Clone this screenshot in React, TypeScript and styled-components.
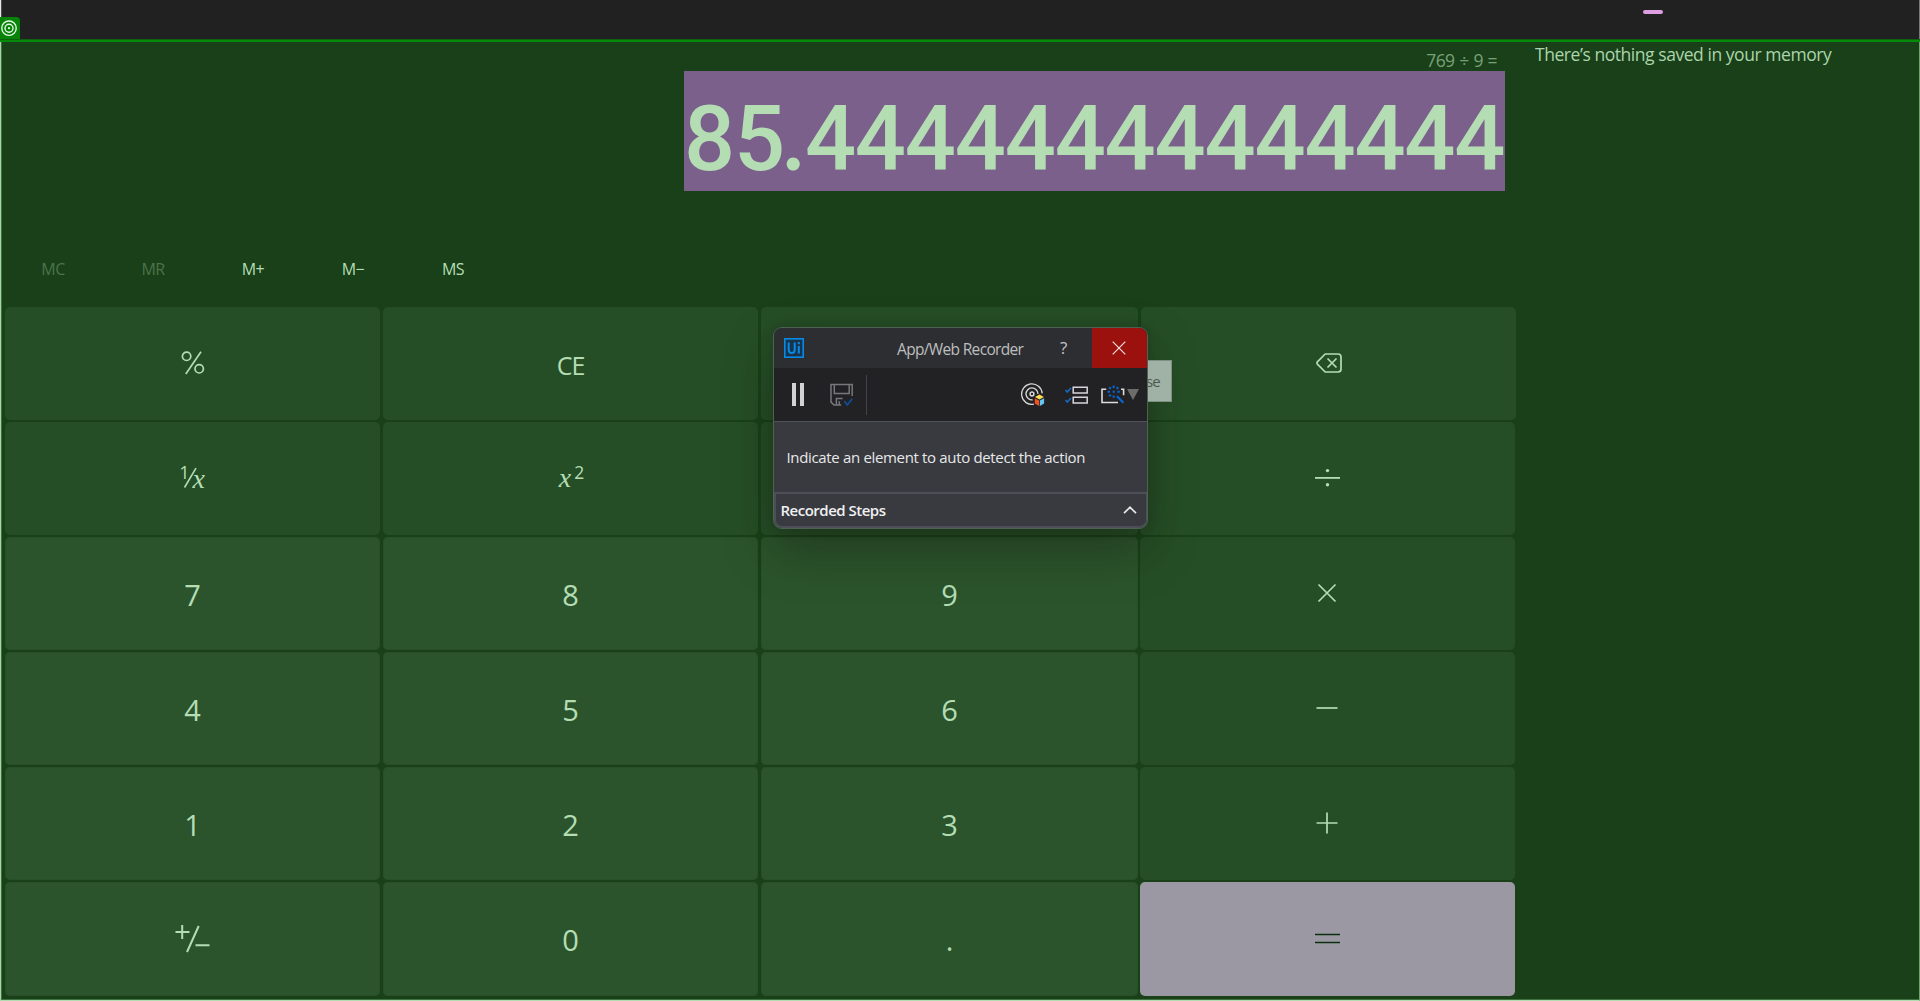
import React from "react";
import styled, { createGlobalStyle } from "styled-components";

const Global = createGlobalStyle`
  * { box-sizing: border-box; }
  body { margin: 0; background: #194019; font-family: "Open Sans", "Noto Sans", sans-serif; overflow: hidden; }
`;

const Screen = styled.div`
  position: relative;
  width: 1920px;
  height: 1001px;
  display: flex;
  flex-direction: column;
  overflow: hidden;
  background: #194019;
`;

const TopStrip = styled.header`
  height: 39px;
  flex: none;
  display: flex;
  align-items: flex-end;
  background: #212121;
  border-left: 1px solid #e4e6e4;
  border-right: 1px solid #777;
  box-shadow: inset 1px 0 #4c4e4c;
`;

const TargetTag = styled.div`
  width: 20px;
  height: 22px;
  margin-left: -1px;
  background: #078407;
  border-top-right-radius: 4px;
  svg { display: block; }
`;

const Pill = styled.div`
  width: 20px;
  height: 4px;
  margin: 0 0 25px 1623px;
  border-radius: 2px;
  background: #df9ee2;
`;

const HighlightEdge = styled.div`
  height: 3px;
  flex: none;
  border-top: 1px solid #0d600f;
  background: #068a0a;
`;

const Workspace = styled.main`
  flex: 1;
  display: flex;
  border-left: 1px solid #a9d5a9;
  border-right: 1px solid #6da56d;
  border-bottom: 1px solid #b3dcb3;
  box-shadow: inset 1px 0 #3f703f, inset 0 -1px #3f703f;
`;

const Calculator = styled.section`
  width: 1515px;
  padding-left: 4px;
`;

const Readout = styled.div`
  height: 201px;
  padding-right: 11px;
  display: flex;
  flex-direction: column;
  align-items: flex-end;
`;

const Expression = styled.div`
  height: 29px;
  padding: 5px 8px 0 0;
  font-size: 17.5px;
  line-height: 26px;
  letter-spacing: -0.6px;
  word-spacing: 0.8px;
  color: #78a277;
  white-space: nowrap;
`;

const Result = styled.div`
  width: 821px;
  height: 120px;
  background: #7a608a;
  color: #b4ddb4;
  font-family: Roboto, "Open Sans", sans-serif;
  font-size: 90px;
  font-weight: 500;
  line-height: 137px;
  letter-spacing: -1.2px;
  white-space: nowrap;
`;

const Point = styled.span`
  display: inline-block;
  width: 21px;
  font-family: Lato, sans-serif;
  font-weight: 700;
  font-size: 86px;
  line-height: 1;
  text-indent: -1px;
`;

const MemoryBar = styled.nav`
  height: 64px;
  display: flex;
`;

const MemoryKey = styled.div<{ $off?: boolean }>`
  width: 100px;
  padding-top: 14px;
  padding-right: 4px;
  text-align: center;
  font-size: 16px;
  line-height: 25px;
  letter-spacing: -0.6px;
  color: ${(p) => (p.$off ? "#4a7449" : "#b4ddb4")};
`;

const Pad = styled.div`
  display: flex;
  flex-direction: column;
  gap: 2px;
`;

const KeyRow = styled.div<{ $shift?: boolean; $tall?: boolean }>`
  display: grid;
  grid-template-columns: 375px 375px 377px 375px;
  column-gap: 3px;
  height: ${(p) => (p.$tall ? "114px" : "113px")};
  > :last-child { margin-left: ${(p) => (p.$shift ? "0" : "-1px")}; margin-right: ${(p) => (p.$shift ? "0" : "1px")}; }
`;

type Tone = "op" | "digit" | "equals";
const tones: Record<Tone, string> = { op: "#254e26", digit: "#2b542c", equals: "#9c98a3" };

const Key = styled.div<{ $tone: Tone }>`
  display: flex;
  align-items: center;
  justify-content: center;
  border-radius: 5px;
  background: ${(p) => tones[p.$tone]};
  box-shadow: ${(p) => (p.$tone === "digit" ? "inset 0 0 0 1px #275029" : "none")};
  color: ${(p) => (p.$tone === "equals" ? "#09300e" : "#b4ddb4")};
  font-size: 29px;
  line-height: 36px;
  svg { display: block; margin-bottom: 1px; }
`;

const Caption = styled.span<{ $tight?: boolean }>`
  padding-top: 2px;
  font-size: ${(p) => (p.$tight ? "25px" : "29px")};
  letter-spacing: ${(p) => (p.$tight ? "-1px" : "0")};
`;

const MathGlyph = styled.span`
  display: inline-flex;
  align-items: flex-end;
  height: 30px;
  margin-bottom: 10px;
  padding-left: 2px;
  font-family: "Liberation Serif", serif;
  font-style: italic;
  font-size: 28px;
  line-height: 22px;
`;

const Raised = styled.sup`
  align-self: flex-start;
  margin: 4px 0 0 3px;
  font-family: "Open Sans", sans-serif;
  font-style: normal;
  font-size: 17.5px;
  line-height: 18px;
`;

const MemoryPane = styled.aside`
  flex: 1;
  padding: 0 0 0 19px;
  font-size: 17.5px;
  line-height: 25px;
  letter-spacing: -0.45px;
  color: #abd5aa;
  white-space: nowrap;
`;

const Hint = styled.div`
  position: absolute;
  left: 1130px;
  top: 360px;
  width: 42px;
  height: 42px;
  padding: 10px 0 0 15px;
  background: #9fb2a5;
  border: 1px solid #7c917f;
  color: #4c594f;
  font-size: 15px;
  line-height: 20px;
  letter-spacing: -0.8px;
`;

const Recorder = styled.section`
  position: absolute;
  left: 773px;
  top: 327px;
  width: 375px;
  height: 202px;
  border: 1px solid #4f6152;
  border-radius: 9px;
  overflow: hidden;
  background: #383a40;
  color: #e8e8e8;
`;

const RecorderShadow = styled.div`
  position: absolute;
  left: 773px;
  top: 327px;
  width: 375px;
  height: 202px;
  border-radius: 9px;
  box-shadow: 0 22px 48px rgba(20, 20, 10, 0.36), 0 0 14px rgba(0, 0, 0, 0.12);
`;

const TitleBar = styled.div`
  height: 40px;
  display: flex;
  align-items: center;
  padding-left: 10px;
  background: #2d2e32;
`;

const RecorderTitle = styled.div`
  width: 140px;
  margin-left: 93px;
  padding-top: 1px;
  font-size: 15.5px;
  line-height: 22px;
  letter-spacing: -0.66px;
  color: #bebebf;
  white-space: nowrap;
`;

const HelpMark = styled.div`
  width: 20px;
  margin-left: 23px;
  font-size: 17px;
  line-height: 24px;
  color: #c4c4c4;
`;

const CloseBox = styled.div`
  width: 55px;
  height: 40px;
  margin-left: auto;
  padding-right: 1px;
  display: flex;
  align-items: center;
  justify-content: center;
  background: #9a110e;
`;

const Toolbar = styled.div`
  height: 54px;
  display: flex;
  align-items: center;
  background: #222224;
  border-bottom: 1px solid #50525a;
  svg { display: block; flex: none; }
`;

const Divider = styled.div`
  width: 1px;
  height: 40px;
  margin: 0 154px 0 12px;
  background: #414349;
`;

const Slot = styled.div<{ $left: number }>`
  margin-left: ${(p) => p.$left}px;
`;

const Message = styled.p`
  margin: 0;
  height: 70px;
  padding: 24px 0 0 12.5px;
  font-size: 15px;
  line-height: 22px;
  letter-spacing: -0.34px;
  white-space: nowrap;
`;

const Steps = styled.div`
  height: 36px;
  display: flex;
  align-items: center;
  justify-content: space-between;
  padding: 0 9px 0 4.5px;
  border: 2px solid #4d4f58;
  border-right-width: 1px;
  border-bottom-right-radius: 8px;
  border-bottom-left-radius: 8px;
  font-size: 15px;
  font-weight: 600;
  line-height: 22px;
  letter-spacing: -0.5px;
  color: #f0f0f0;
`;

const stroke = { fill: "none", stroke: "currentColor", strokeWidth: 1.7 } as const;

const Percent = () => (
  <svg width="24" height="24" viewBox="0 0 24 24" {...stroke}>
    <circle cx="5.6" cy="5.3" r="4.2" />
    <circle cx="18.2" cy="17.8" r="4.2" />
    <path d="M20 .8 4.8 23" />
  </svg>
);

const Backspace = () => (
  <svg width="26" height="20" viewBox="0 0 26 20" {...stroke}>
    <path d="M9.2 1H22q3 0 3 3v12q0 3-3 3H9.2L1.6 11.4q-1.2-1.4 0-2.8z" strokeLinejoin="round" />
    <path d="m11.5 5.5 9 9m0-9-9 9" />
  </svg>
);

const Divide = () => (
  <svg width="25" height="20" viewBox="0 0 25 20" fill="currentColor">
    <path d="M0 9h25v1.8H0z" />
    <circle cx="12.5" cy="2.6" r="1.7" />
    <circle cx="12.5" cy="16.8" r="1.7" />
  </svg>
);

const Times = () => (
  <svg width="23" height="22" viewBox="0 0 23 22" {...stroke}><path d="m2.5 2.5 17 17m0-17-17 17" /></svg>
);
const Minus = () => (
  <svg width="23" height="22" viewBox="0 0 23 22" {...stroke}><path d="M.5 11h21" /></svg>
);
const Plus = () => (
  <svg width="23" height="22" viewBox="0 0 23 22" {...stroke}><path d="M.5 11h21M11 .5v21" /></svg>
);
const Equals = () => (
  <svg width="25" height="20" viewBox="0 0 25 20" {...stroke}><path d="M0 5.5h25M0 13.5h25" /></svg>
);
const Negate = () => (
  <svg width="38" height="28" viewBox="0 0 38 28" fill="none" stroke="currentColor" strokeWidth="2">
    <path d="M1.5 7h14M8.2 0v14M24.7 1 13 27M21.5 20.2h14" />
  </svg>
);
const Reciprocal = () => (
  <svg width="40" height="44" viewBox="-7 -10 40 44">
    <path d="M16 2.2 4.5 21.5" fill="none" stroke="currentColor" strokeWidth="1.6" />
    <text x="-.8" y="13.2" fontFamily="Open Sans, sans-serif" fontSize="18" fill="currentColor">1</text>
    <text x="12.4" y="22" fontFamily="Liberation Serif, serif" fontStyle="italic" fontSize="28" fill="currentColor">x</text>
  </svg>
);

const TargetMark = () => (
  <svg width="20" height="22" viewBox="0 0 20 22" fill="none" stroke="#e6f6e6" strokeWidth="1.4">
    <circle cx="9" cy="11.2" r="7.2" />
    <circle cx="9" cy="11.2" r="4" />
    <circle cx="9" cy="11.2" r="1.1" fill="#e6f6e6" stroke="none" />
  </svg>
);

const UiLogo = () => (
  <svg width="20" height="20" viewBox="0 0 20 20" fill="none" stroke="#078ae6">
    <rect x=".8" y=".8" width="18.4" height="18.4" strokeWidth="1.6" fill="#18344d" />
    <path d="M4.7 4.5v7.3q0 3.2 3 3.2t3-3.2V4.5M14.8 8v7.6M14.8 4v2.3" strokeWidth="2" />
  </svg>
);

const CloseMark = () => (
  <svg width="14" height="14" viewBox="0 0 14 14" fill="none" stroke="#f1dede" strokeWidth="1.2"><path d="m.7.7 12.6 12.6m0-12.6L.7 13.3" /></svg>
);

const Pause = () => (
  <svg width="12" height="23" viewBox="0 0 12 23" fill="#d2d2d2"><path d="M0 0h4v23H0zM8 0h4v23H8z" /></svg>
);

const Save = () => (
  <svg width="24" height="24" viewBox="0 0 24 24" fill="none" stroke="#77787b" strokeWidth="1.5">
    <path d="M22.2 13V1.5H1v17.6L4 22h7.2M4.3 2v8.5h14.9V2M6.4 22v-6.6h6.2M9.3 18.2v4" />
    <path d="m14.3 18.2 3 3.6 5-6" stroke="#104b94" strokeWidth="1.8" />
  </svg>
);

const ColorTarget = () => (
  <svg width="24" height="24" viewBox="0 0 24 24" fill="none" stroke="#d4d4d4" strokeWidth="1.35">
    <path d="M13 21.2A10.3 10.3 0 1 1 21.2 10.4M11.7 16.9A6 6 0 1 1 17 11" />
    <circle cx="11" cy="11" r="1.9" strokeWidth="1.5" />
    <path d="m18.5 11.6 4.4 2.5-4.4 2.5-4.5-2.5z" fill="#ffdc55" stroke="none" />
    <path d="m13.8 15.3 4.3 2.3V23l-4.3-2.5z" fill="#f5501e" stroke="none" />
    <path d="m18.9 17.6 4.2-2.3v5.2L18.9 23z" fill="#62c8f5" stroke="none" />
  </svg>
);

const Checklist = () => (
  <svg width="23" height="18" viewBox="0 0 23 18" fill="none" stroke="#d8d4da" strokeWidth="1.5">
    <path d="M8.2 1.2h14v5.7h-14zM8.2 11.2h14v5.7h-14z" />
    <path d="M.4 4 2.3 6 6 2M.4 14l1.9 2L6 12" stroke="#1568c2" strokeWidth="1.7" />
  </svg>
);

const Wand = () => (
  <svg width="24" height="20" viewBox="0 -2 24 20" fill="none" stroke="#dcdcdc" strokeWidth="1.6">
    <path d="M5.2 2.2H1v13.3h16M20 2.2h2.6v6" />
    <path d="m16 9.2 6.4 6.6" stroke="#0867d8" strokeWidth="2.1" />
    <path d="M12.7-1.4v2.4M12.7 8.4v2.4M6.6 4.7H9M16.4 4.7h2.4M8.2.2l1.6 1.6M17.2.2l-1.6 1.6M8.2 9.2l1.6-1.6M11.7 4.7h2" stroke="#0867d8" strokeWidth="2" />
  </svg>
);

const Caret = () => (
  <svg width="12" height="12" viewBox="0 0 12 12"><path d="M0 0h12L6 11z" fill="#6d6c6b" /></svg>
);

const Chevron = () => (
  <svg width="14" height="8" viewBox="0 0 14 8" fill="none" stroke="#e6e6e6" strokeWidth="1.7"><path d="M1 7.2 7 1.3l6 5.9" /></svg>
);

const digitRows: [string, string, string, React.ReactNode][] = [
  ["7", "8", "9", <Times />],
  ["4", "5", "6", <Minus />],
  ["1", "2", "3", <Plus />],
];

export default function App() {
  return (
    <>
      <Global />
      <Screen>
        <TopStrip>
          <TargetTag><TargetMark /></TargetTag>
          <Pill />
        </TopStrip>
        <HighlightEdge />
        <Workspace>
          <Calculator>
            <Readout>
              <Expression>769 ÷ 9 =</Expression>
              <Result>85<Point>.</Point>44444444444444</Result>
            </Readout>
            <MemoryBar>
              <MemoryKey $off>MC</MemoryKey>
              <MemoryKey $off>MR</MemoryKey>
              <MemoryKey>M+</MemoryKey>
              <MemoryKey>M−</MemoryKey>
              <MemoryKey>MS</MemoryKey>
            </MemoryBar>
            <Pad>
              <KeyRow $shift>
                <Key $tone="op"><Percent /></Key>
                <Key $tone="op"><Caption $tight>CE</Caption></Key>
                <Key $tone="op" />
                <Key $tone="op"><Backspace /></Key>
              </KeyRow>
              <KeyRow>
                <Key $tone="op"><Reciprocal /></Key>
                <Key $tone="op">
                  <MathGlyph>x<Raised>2</Raised></MathGlyph>
                </Key>
                <Key $tone="op" />
                <Key $tone="op"><Divide /></Key>
              </KeyRow>
              {digitRows.map(([a, b, c, op]) => (
                <KeyRow key={a}>
                  <Key $tone="digit"><Caption>{a}</Caption></Key>
                  <Key $tone="digit"><Caption>{b}</Caption></Key>
                  <Key $tone="digit"><Caption>{c}</Caption></Key>
                  <Key $tone="op">{op}</Key>
                </KeyRow>
              ))}
              <KeyRow $tall>
                <Key $tone="digit"><Negate /></Key>
                <Key $tone="digit"><Caption>0</Caption></Key>
                <Key $tone="digit"><Caption>.</Caption></Key>
                <Key $tone="equals"><Equals /></Key>
              </KeyRow>
            </Pad>
          </Calculator>
          <MemoryPane>There’s nothing saved in your memory</MemoryPane>
        </Workspace>
        <RecorderShadow />
        <Hint>se</Hint>
        <Recorder>
          <TitleBar>
            <UiLogo />
            <RecorderTitle>App/Web Recorder</RecorderTitle>
            <HelpMark>?</HelpMark>
            <CloseBox><CloseMark /></CloseBox>
          </TitleBar>
          <Toolbar>
            <Slot $left={18}><Pause /></Slot>
            <Slot $left={26}><Save /></Slot>
            <Divider />
            <ColorTarget />
            <Slot $left={20}><Checklist /></Slot>
            <Slot $left={13}><Wand /></Slot>
            <Slot $left={2}><Caret /></Slot>
          </Toolbar>
          <Message>Indicate an element to auto detect the action</Message>
          <Steps>
            <span>Recorded Steps</span>
            <Chevron />
          </Steps>
        </Recorder>
      </Screen>
    </>
  );
}
